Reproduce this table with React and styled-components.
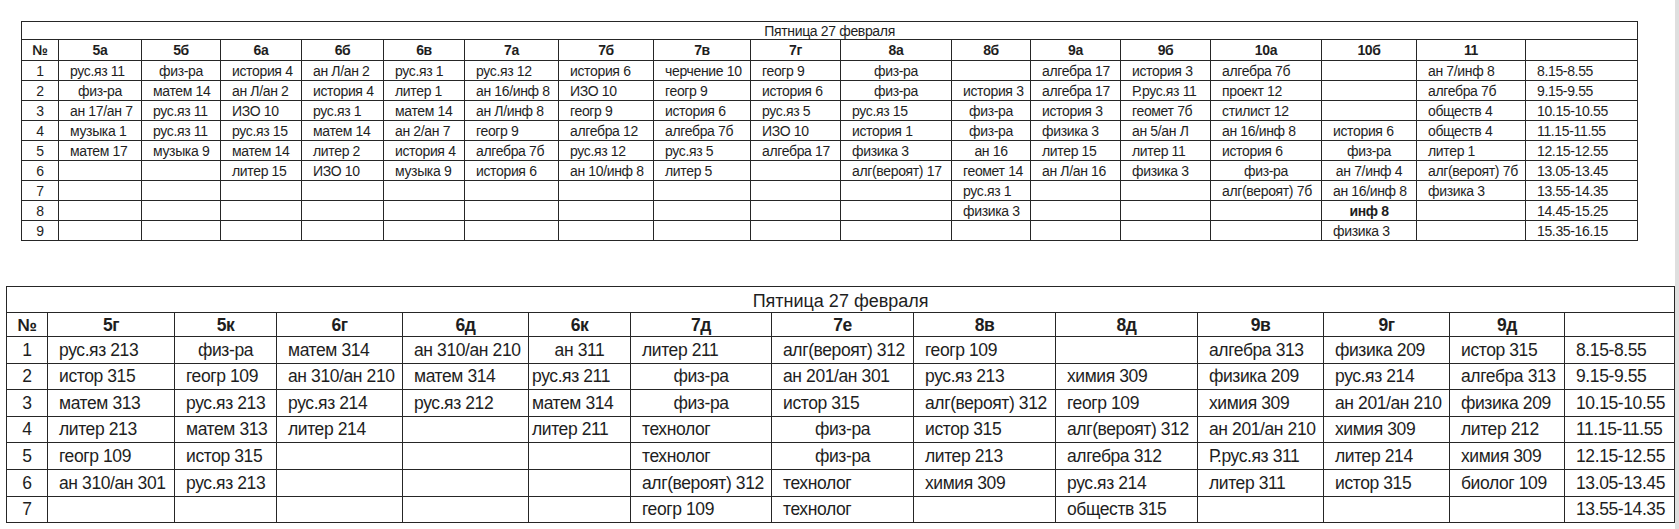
import React from "react";
import styled, { createGlobalStyle } from "styled-components";

// "^" in front of a lesson = centred in its cell, "*" = bold and centred
const TOP = {
  title: "Пятница 27 февраля",
  widths: [37, 83, 79, 81, 82, 81, 94, 95, 97, 90, 111, 79, 90, 90, 111, 95, 109, 112],
  classes: ["5а", "5б", "6а", "6б", "6в", "7а", "7б", "7в", "7г", "8а", "8б", "9а", "9б", "10а", "10б", "11"],
  rows: [
    ["рус.яз 11", "^физ-ра", "история 4", "ан Л/ан 2", "рус.яз 1", "рус.яз 12", "история 6", "черчение 10", "геогр 9", "^физ-ра", "", "алгебра 17", "история 3", "алгебра 7б", "", "ан 7/инф 8", "8.15-8.55"],
    ["^физ-ра", "матем 14", "ан Л/ан 2", "история 4", "литер 1", "ан 16/инф 8", "ИЗО 10", "геогр 9", "история 6", "^физ-ра", "история 3", "алгебра 17", "Р.рус.яз 11", "проект 12", "", "алгебра 7б", "9.15-9.55"],
    ["ан 17/ан 7", "рус.яз 11", "ИЗО 10", "рус.яз 1", "матем 14", "ан Л/инф 8", "геогр 9", "история 6", "рус.яз 5", "рус.яз 15", "^физ-ра", "история 3", "геомет 7б", "стилист 12", "", "обществ 4", "10.15-10.55"],
    ["музыка 1", "рус.яз 11", "рус.яз 15", "матем 14", "ан 2/ан 7", "геогр 9", "алгебра 12", "алгебра 7б", "ИЗО 10", "история 1", "^физ-ра", "физика 3", "ан 5/ан Л", "ан 16/инф 8", "история 6", "обществ 4", "11.15-11.55"],
    ["матем 17", "музыка 9", "матем 14", "литер 2", "история 4", "алгебра 7б", "рус.яз 12", "рус.яз 5", "алгебра 17", "физика 3", "^ан 16", "литер 15", "литер 11", "история 6", "^физ-ра", "литер 1", "12.15-12.55"],
    ["", "", "литер 15", "ИЗО 10", "музыка 9", "история 6", "ан 10/инф 8", "литер 5", "", "алг(вероят) 17", "геомет 14", "ан Л/ан 16", "физика 3", "^физ-ра", "^ан 7/инф 4", "алг(вероят) 7б", "13.05-13.45"],
    ["", "", "", "", "", "", "", "", "", "", "рус.яз 1", "", "", "алг(вероят) 7б", "ан 16/инф 8", "физика 3", "13.55-14.35"],
    ["", "", "", "", "", "", "", "", "", "", "физика 3", "", "", "", "*инф 8", "", "14.45-15.25"],
    ["", "", "", "", "", "", "", "", "", "", "", "", "", "", "физика 3", "", "15.35-16.15"],
  ],
};

const BOTTOM = {
  title: "Пятница 27 февраля",
  widths: [41, 127, 102, 126, 126, 102, 141, 142, 142, 142, 126, 126, 115, 110],
  tight: [5],
  classes: ["5г", "5к", "6г", "6д", "6к", "7д", "7е", "8в", "8д", "9в", "9г", "9д"],
  rows: [
    ["рус.яз 213", "^физ-ра", "матем 314", "ан 310/ан 210", "^ан 311", "литер 211", "алг(вероят) 312", "геогр 109", "", "алгебра 313", "физика 209", "истор 315", "8.15-8.55"],
    ["истор 315", "геогр 109", "ан 310/ан 210", "матем 314", "рус.яз 211", "^физ-ра", "ан 201/ан 301", "рус.яз 213", "химия 309", "физика 209", "рус.яз 214", "алгебра 313", "9.15-9.55"],
    ["матем 313", "рус.яз 213", "рус.яз 214", "рус.яз 212", "матем 314", "^физ-ра", "истор 315", "алг(вероят) 312", "геогр 109", "химия 309", "ан 201/ан 210", "физика 209", "10.15-10.55"],
    ["литер 213", "матем 313", "литер 214", "", "литер 211", "технолог", "^физ-ра", "истор 315", "алг(вероят) 312", "ан 201/ан 210", "химия 309", "литер 212", "11.15-11.55"],
    ["геогр 109", "истор 315", "", "", "", "технолог", "^физ-ра", "литер 213", "алгебра 312", "Р.рус.яз 311", "литер 214", "химия 309", "12.15-12.55"],
    ["ан 310/ан 301", "рус.яз 213", "", "", "", "алг(вероят) 312", "технолог", "химия 309", "рус.яз 214", "литер 311", "истор 315", "биолог 109", "13.05-13.45"],
    ["", "", "", "", "", "геогр 109", "технолог", "", "обществ 315", "", "", "", "13.55-14.35"],
  ],
};

const GlobalStyle = createGlobalStyle`
  html, body {
    margin: 0;
    padding: 0;
    background: #fff;
  }
  body {
    font-family: "Liberation Sans", Arial, sans-serif;
    color: #1e1e1e;
  }
`;

const Page = styled.div`
  display: flex;
  width: 1679px;
  height: 529px;
  overflow: hidden;
`;

const Sheet = styled.main`
  flex: 1;
  display: flex;
  flex-direction: column;
  align-items: flex-start;
  gap: 45px;
  padding-top: 21px;
`;

const ScrollEdge = styled.div`
  width: 4px;
  background: #dfdfdf;
`;

const Timetable = styled.table`
  border-collapse: collapse;
  table-layout: fixed;
  width: ${(p) => p.$width}px;
  margin-left: ${(p) => p.$left}px;
  line-height: 1;
`;

const Col = styled.col`
  width: ${(p) => p.$w}px;
`;

const Row = styled.tr`
  height: ${(p) => p.$h}px;
`;

const baseCell = `
  border: 1px solid #262626;
  padding: 0;
  white-space: nowrap;
  overflow: hidden;
  vertical-align: middle;
`;

const TitleCell = styled.td`
  ${baseCell}
  text-align: center;
  font-size: ${(p) => (p.$big ? 18 : 14)}px;
  letter-spacing: ${(p) => (p.$big ? 0 : -0.35)}px;
  padding-top: ${(p) => (p.$big ? 2 : 0)}px;
`;

const HeadCell = styled.th`
  ${baseCell}
  text-align: center;
  font-weight: 700;
  font-size: ${(p) => (p.$big ? 17.5 : 14)}px;
  letter-spacing: ${(p) => (p.$big ? -0.4 : -0.35)}px;
  padding-top: ${(p) => (p.$big ? 2 : 0)}px;
`;

const Cell = styled.td`
  ${baseCell}
  font-size: ${(p) => (p.$big ? 17.5 : 14)}px;
  letter-spacing: ${(p) => (p.$big ? -0.4 : -0.35)}px;
  text-align: ${(p) => (p.$center ? "center" : "left")};
  font-weight: ${(p) => (p.$bold ? 700 : 400)};
  padding-left: ${(p) => (p.$center ? 0 : p.$pad)}px;
  padding-top: 1px;
`;

const NumCell = styled(Cell)`
  text-align: center;
  padding-left: 0;
`;

function Lesson({ value, big, pad }) {
  const center = value.startsWith("^") || value.startsWith("*");
  const bold = value.startsWith("*");
  const text = center ? value.slice(1) : value;
  return (
    <Cell $big={big} $center={center} $bold={bold} $pad={pad}>
      {text}
    </Cell>
  );
}

function Schedule({ data, big, left, heights }) {
  const width = data.widths.reduce((a, b) => a + b, 0);
  const span = data.widths.length;
  const tight = data.tight || [];
  return (
    <Timetable $width={width} $left={left}>
      <colgroup>
        {data.widths.map((w, i) => (
          <Col key={i} $w={w} />
        ))}
      </colgroup>
      <tbody>
        <Row $h={heights.title}>
          <TitleCell colSpan={span} $big={big}>
            {data.title}
          </TitleCell>
        </Row>
        <Row $h={heights.head}>
          <HeadCell $big={big}>№</HeadCell>
          {data.classes.map((c) => (
            <HeadCell key={c} $big={big}>
              {c}
            </HeadCell>
          ))}
          <HeadCell $big={big} />
        </Row>
        {data.rows.map((row, r) => (
          <Row key={r} $h={heights.row}>
            <NumCell $big={big}>{r + 1}</NumCell>
            {row.map((value, c) => (
              <Lesson
                key={c}
                value={value}
                big={big}
                pad={tight.includes(c + 1) ? 3 : 11}
              />
            ))}
          </Row>
        ))}
      </tbody>
    </Timetable>
  );
}

export default function App() {
  return (
    <>
      <GlobalStyle />
      <Page>
        <Sheet>
          <Schedule data={TOP} left={21} heights={{ title: 18, head: 21, row: 20 }} />
          <Schedule data={BOTTOM} big left={6} heights={{ title: 26, head: 24, row: 26.6 }} />
        </Sheet>
        <ScrollEdge />
      </Page>
    </>
  );
}
